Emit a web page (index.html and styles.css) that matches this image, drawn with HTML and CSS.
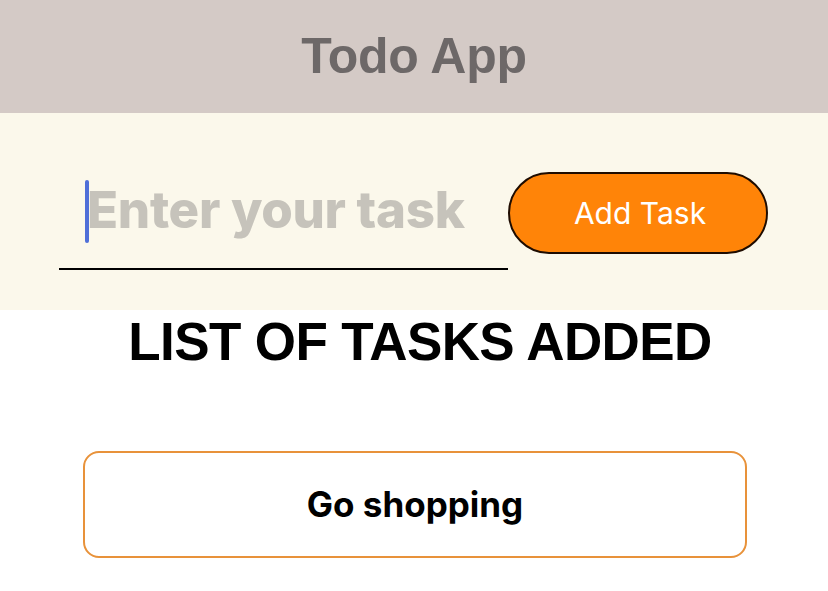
FILE: index.html
```html
<!DOCTYPE html>
<html>
<head>
<meta charset="utf-8">
<link rel="stylesheet" href="styles.css">
</head>
<body>
<header class="header"><h1 class="title">Todo App</h1></header>
<section class="entry">
  <div class="field">
    <span class="caret"></span>
    <span class="placeholder">Enter your task</span>
  </div>
  <button class="add-btn">Add Task</button>
</section>
<h2 class="list-title">LIST OF TASKS ADDED</h2>
<ul class="tasks">
  <li class="task">Go shopping</li>
</ul>
</body>
</html>
```
FILE: styles.css
```css
html, body { margin: 0; padding: 0; background: #ffffff; }
body { width: 828px; height: 591px; overflow: hidden; font-family: "Liberation Sans", Arial, sans-serif; }
.header { height: 113px; background: #d4cac6; display: flex; align-items: center; justify-content: center; }
.title { margin: 0; font-size: 50px; font-weight: 700; color: #6d6868; line-height: 1; padding-bottom: 2px; letter-spacing: -0.3px; }
.entry { height: 197px; background: #fbf8eb; display: flex; align-items: flex-start; padding: 0 0 0 59px; box-sizing: border-box; }
.field { width: 449px; height: 157px; border-bottom: 2px solid #000; box-sizing: border-box; display: flex; align-items: center; padding: 42px 0 0 26px; }
.caret { width: 4px; height: 63px; background: #4f6fd8; border-radius: 2px; }
.placeholder { font-family: Inter, "Noto Sans", sans-serif; font-weight: 800; font-size: 51px; color: #c6c3bb; letter-spacing: -0.3px; line-height: 1; padding-bottom: 4px; margin-left: -2px; }
.add-btn { margin-top: 59px; width: 260px; height: 82px; border-radius: 41px; background: #ff8408; border: 2px solid #1e0c00; color: #fff; font-family: Inter, "Noto Sans", sans-serif; font-size: 30px; font-weight: 400; padding: 0 0 0 4px; box-sizing: border-box; }
.list-title { margin: 0; text-align: center; font-size: 53px; font-weight: 700; color: #000; line-height: 1; padding: 5px 0 0 12px; letter-spacing: -0.6px; }
.tasks { list-style: none; margin: 0; padding: 0 0 0 83px; }
.task { margin-top: 83px; width: 664px; height: 107px; box-sizing: border-box; border: 2px solid #e8923a; border-radius: 16px; display: flex; align-items: center; justify-content: center; font-family: Inter, Roboto, sans-serif; font-weight: 700; font-size: 35px; color: #000; letter-spacing: 0; padding-bottom: 2px; }
```
